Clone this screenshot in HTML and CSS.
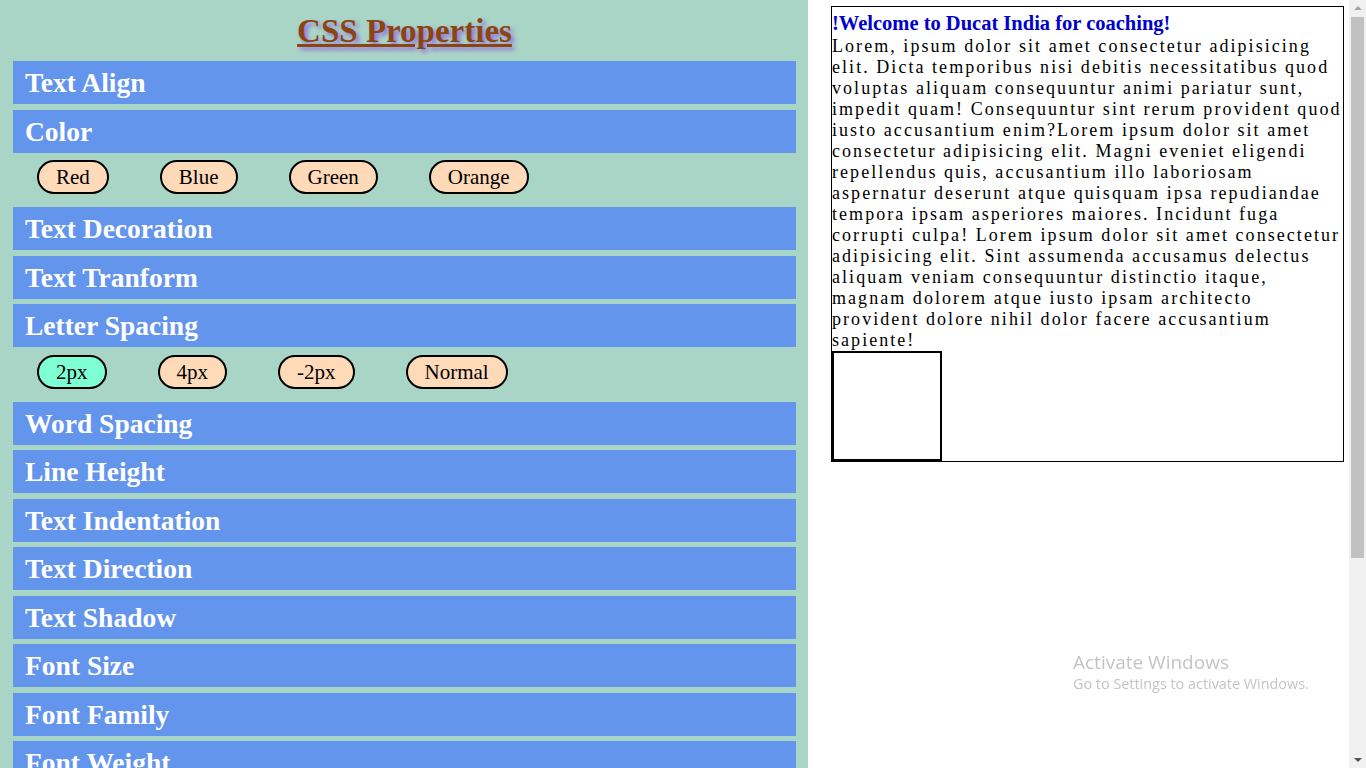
FILE: index.html
```html
<!DOCTYPE html>
<html>
<head>
<meta charset="utf-8">
<title>CSS Properties</title>
<link rel="stylesheet" href="styles.css">
</head>
<body>
<div class="page">
  <div class="left">
    <h1 class="title">CSS Properties</h1>
    <div class="bar">Text Align</div>
    <div class="bar">Color</div>
    <div class="btnrow">
      <span class="pill">Red</span>
      <span class="pill">Blue</span>
      <span class="pill">Green</span>
      <span class="pill">Orange</span>
    </div>
    <div class="bar">Text Decoration</div>
    <div class="bar">Text Tranform</div>
    <div class="bar">Letter Spacing</div>
    <div class="btnrow">
      <span class="pill active">2px</span>
      <span class="pill">4px</span>
      <span class="pill">-2px</span>
      <span class="pill">Normal</span>
    </div>
    <div class="bar">Word Spacing</div>
    <div class="bar">Line Height</div>
    <div class="bar">Text Indentation</div>
    <div class="bar">Text Direction</div>
    <div class="bar">Text Shadow</div>
    <div class="bar">Font Size</div>
    <div class="bar">Font Family</div>
    <div class="bar">Font Weight</div>
  </div>
  <div class="right">
    <div class="box">
      <div class="welcome">!Welcome to Ducat India for coaching!</div>
      <p class="text">Lorem, ipsum dolor sit amet consectetur adipisicing elit. Dicta temporibus nisi debitis necessitatibus quod voluptas aliquam consequuntur animi pariatur sunt, impedit quam! Consequuntur sint rerum provident quod iusto accusantium enim?Lorem ipsum dolor sit amet consectetur adipisicing elit. Magni eveniet eligendi repellendus quis, accusantium illo laboriosam aspernatur deserunt atque quisquam ipsa repudiandae tempora ipsam asperiores maiores. Incidunt fuga corrupti culpa! Lorem ipsum dolor sit amet consectetur adipisicing elit. Sint assumenda accusamus delectus aliquam veniam consequuntur distinctio itaque, magnam dolorem atque iusto ipsam architecto provident dolore nihil dolor facere accusantium sapiente!</p>
      <div class="square"></div>
    </div>
  </div>
</div>
<div class="scrollbar">
  <div class="arrow up"></div>
  <div class="thumb"></div>
  <div class="arrow down"></div>
</div>
<div class="watermark">
  <div class="wm1">Activate Windows</div>
  <div class="wm2">Go to Settings to activate Windows.</div>
</div>
</body>
</html>
```
FILE: styles.css
```css
html, body {
  margin: 0;
  padding: 0;
  height: 768px;
  overflow: hidden;
  background: #ffffff;
  font-family: "Liberation Serif", "Times New Roman", serif;
}
.page {
  display: flex;
  align-items: flex-start;
  width: 1349px;
}
.left {
  width: 808px;
  box-sizing: border-box;
  padding: 13px 12px 0 13px;
  background: #a9d5c6;
  display: flex;
  flex-direction: column;
  height: 768px;
  overflow: hidden;
}
.title {
  margin: 0 0 11px 0;
  text-align: center;
  font-size: 33px;
  line-height: 37px;
  font-weight: bold;
  color: #8b4513;
  text-decoration: underline;
  text-shadow: 3px 3px 4px #9370db;
  flex-shrink: 0;
}
.bar {
  flex-shrink: 0;
  background: #6495ed;
  color: #ffffff;
  font-weight: bold;
  font-size: 27.5px;
  height: 43px;
  line-height: 43px;
  padding: 0 12px;
  margin-bottom: 5.5px;
  box-sizing: border-box;
}
.btnrow {
  flex-shrink: 0;
  display: flex;
  gap: 51px;
  height: 49px;
  box-sizing: border-box;
  padding: 2px 0 13px 24px;
}
.pill {
  display: inline-block;
  background: #ffdab9;
  border: 2px solid #000;
  border-radius: 17px;
  font-size: 21px;
  line-height: 26px;
  padding: 2px 17px;
  color: #000;
}
.pill.active {
  background: #7fffd4;
}
.right {
  flex: 1;
  padding: 6px 5px 0 23px;
}
.box {
  border: 1px solid #000;
  width: 511px;
}
.welcome {
  color: #0000cd;
  font-weight: bold;
  font-size: 20.5px;
  line-height: 25px;
  padding-top: 4px;
}
.text {
  margin: 0;
  font-size: 18px;
  line-height: 21px;
  letter-spacing: 2.05px;
  color: #000;
}
.square {
  width: 106px;
  height: 106px;
  border: 2px solid #000;
}
.scrollbar {
  position: fixed;
  top: 0;
  right: 0;
  width: 17px;
  height: 768px;
  background: #f1f1f1;
}
.thumb {
  position: absolute;
  top: 17px;
  left: 2px;
  width: 13px;
  height: 541px;
  background: #c1c1c1;
}
.arrow {
  position: absolute;
  left: 5px;
  width: 0;
  height: 0;
  border-left: 4px solid transparent;
  border-right: 4px solid transparent;
}
.arrow.up {
  top: 6px;
  border-bottom: 4px solid #a3a3a3;
}
.arrow.down {
  bottom: 6px;
  border-top: 4px solid #505050;
}
.watermark {
  position: fixed;
  left: 1073px;
  top: 650px;
  color: #c4c4c4;
  font-family: "Open Sans", "Noto Sans", sans-serif;
}
.wm1 {
  font-size: 19px;
  line-height: 24px;
}
.wm2 {
  font-size: 14.4px;
  line-height: 20px;
}
```
